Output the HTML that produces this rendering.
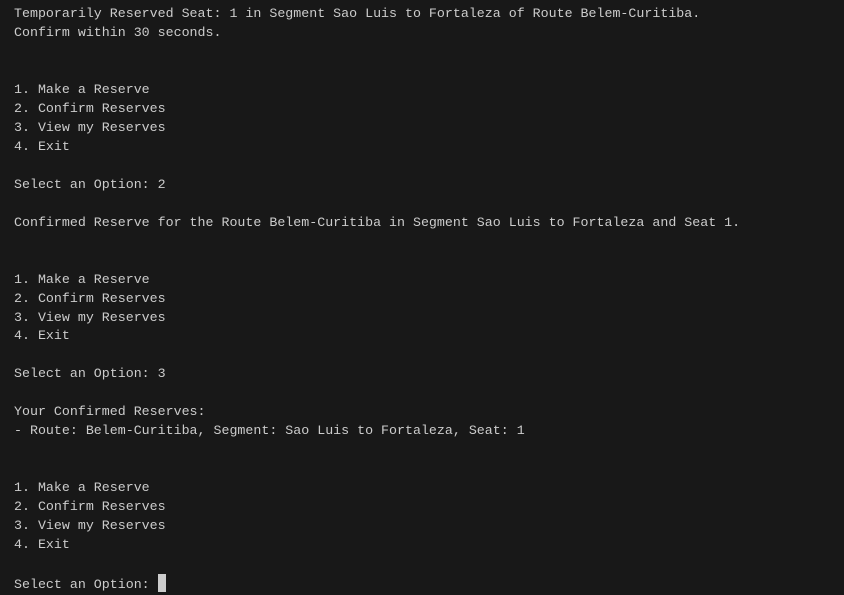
<html><head><style>
body{margin:0;background:#181818;width:844px;height:594px;overflow:hidden}
pre{margin:0;position:absolute;left:14px;top:5px;font-family:"Liberation Mono",monospace;font-size:13.3px;line-height:18.97px;color:#cccccc}
.c{display:inline-block;width:8px;height:18px;background:#cccccc;vertical-align:-4px}
</style></head><body><pre>Temporarily Reserved Seat: 1 in Segment Sao Luis to Fortaleza of Route Belem-Curitiba.
Confirm within 30 seconds.


1. Make a Reserve
2. Confirm Reserves
3. View my Reserves
4. Exit

Select an Option: 2

Confirmed Reserve for the Route Belem-Curitiba in Segment Sao Luis to Fortaleza and Seat 1.


1. Make a Reserve
2. Confirm Reserves
3. View my Reserves
4. Exit

Select an Option: 3

Your Confirmed Reserves:
- Route: Belem-Curitiba, Segment: Sao Luis to Fortaleza, Seat: 1


1. Make a Reserve
2. Confirm Reserves
3. View my Reserves
4. Exit

Select an Option: <span class="c"></span></pre></body></html>
